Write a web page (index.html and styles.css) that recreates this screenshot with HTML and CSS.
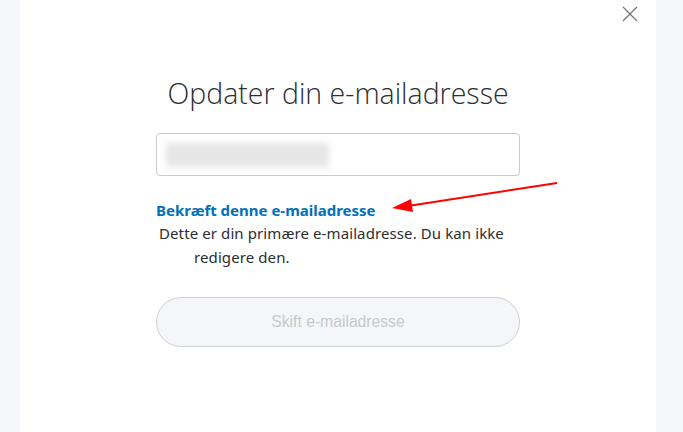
FILE: index.html
```html
<!DOCTYPE html>
<html lang="da">
<head>
  <meta charset="UTF-8" />
  <meta name="viewport" content="width=device-width, initial-scale=1.0">
  <title>Opdater din e-mailadresse</title>
  <link rel="stylesheet" href="styles.css">
</head>
<body>
  <div class="panel">
    <button class="close" aria-label="Luk">
      <svg width="16" height="16" viewBox="0 0 16 16"><path d="M1 1L15 15M15 1L1 15" stroke="#6c7378" stroke-width="1.2" fill="none"/></svg>
    </button>

    <div class="content">
      <h1>Opdater din e-mailadresse</h1>

      <div class="email-field">
        <div class="blur"></div>
      </div>

      <a class="confirm" href="#">Bekræft denne e-mailadresse</a>
      <p class="note">Dette er din primære e-mailadresse. Du kan ikke<br><span class="indent">redigere den.</span></p>

      <button class="change" disabled>Skift e-mailadresse</button>
    </div>

    <!-- pil tegnet oven på skærmbilledet -->
    <svg class="arrow" width="170" height="34" viewBox="0 0 170 34">
      <line x1="167" y1="2" x2="18" y2="25" stroke="#ff0000" stroke-width="2"/>
      <polygon points="2,27 21,18 23,31" fill="#ff0000"/>
    </svg>
  </div>
</body>
</html>
```

FILE: styles.css
```css
body {
  margin: 0;
  background-color: #f5f6fa;
  font-family: "Noto Sans", sans-serif;
  color: #2c2e2f;
}
.panel {
  position: relative;
  width: 636px;
  height: 432px;
  margin-left: 20px;
  background-color: #ffffff;
  display: flex;
  justify-content: center;
}
.close {
  position: absolute;
  top: 6px;
  right: 18px;
  padding: 0;
  border: none;
  background: none;
  cursor: pointer;
}
.content {
  width: 364px;
  display: flex;
  flex-direction: column;
  padding-top: 73px;
}
h1 {
  margin: 0 -40px;
  font-family: "Open Sans", sans-serif;
  font-weight: 300;
  font-size: 28.5px;
  line-height: 40px;
  text-align: center;
  color: #2c2e2f;
}
.email-field {
  margin-top: 20px;
  height: 41px;
  border: 1px solid #c8cbce;
  border-radius: 4px;
  display: flex;
  align-items: center;
  padding-left: 9px;
}
.blur {
  width: 163px;
  height: 24px;
  background-color: #e6e6e6;
  filter: blur(3px);
}
.confirm {
  margin-top: 24px;
  font-weight: bold;
  font-size: 15px;
  line-height: 20px;
  color: #0070ba;
  text-decoration: none;
}
.note {
  margin: 1px 0 0 3px;
  font-size: 15px;
  line-height: 24px;
  letter-spacing: 0.1px;
}
.indent {
  padding-left: 35px;
}
.change {
  margin-top: 28px;
  height: 50px;
  border: 1px solid #ccd0d3;
  border-radius: 25px;
  background-color: #f5f6f9;
  color: #c6c9cd;
  font-family: "Liberation Sans", Arial, sans-serif;
  font-size: 15.7px;
}
.arrow {
  position: absolute;
  left: 370px;
  top: 181px;
}
```
